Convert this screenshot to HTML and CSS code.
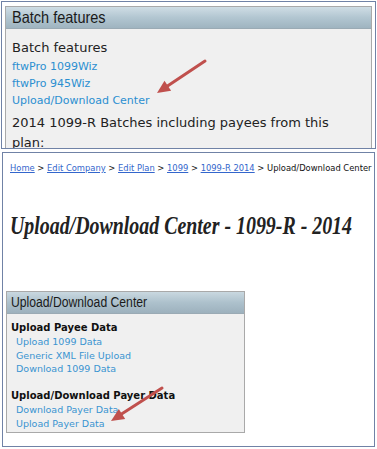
FILE: index.html
```html
<!DOCTYPE html>
<html lang="en">
<head>
    <meta charset="UTF-8">
    <title>Upload/Download Center</title>
    <link rel="stylesheet" href="styles.css">
</head>
<body>
    <div class="shot shot-top">
        <div class="panel">
            <div class="panel-head"><span>Batch features</span></div>
            <div class="panel-body">
                <div class="label">Batch features</div>
                <a class="link" href="#">ftwPro 1099Wiz</a>
                <a class="link" href="#">ftwPro 945Wiz</a>
                <a class="link" href="#">Upload/Download Center</a>
                <div class="label label-gap">2014 1099-R Batches including payees from this plan:</div>
            </div>
        </div>
    </div>

    <div class="shot shot-bottom">
        <div class="crumbs">
            <a href="#">Home</a> &gt; <a href="#">Edit Company</a> &gt; <a href="#">Edit Plan</a> &gt; <a href="#">1099</a> &gt; <a href="#">1099-R 2014</a> &gt; Upload/Download Center
        </div>
        <h1 class="title"><span>Upload/Download Center - 1099-R - 2014</span></h1>
        <div class="box">
            <div class="box-head"><span>Upload/Download Center</span></div>
            <div class="box-body">
                <div class="group">Upload Payee Data</div>
                <a class="sub" href="#">Upload 1099 Data</a>
                <a class="sub" href="#">Generic XML File Upload</a>
                <a class="sub" href="#">Download 1099 Data</a>
                <div class="group group-gap">Upload/Download Payer Data</div>
                <a class="sub" href="#">Download Payer Data</a>
                <a class="sub" href="#">Upload Payer Data</a>
            </div>
        </div>
    </div>

    <!-- red callout arrows drawn over both screenshots -->
    <svg class="arrow arrow-top" width="60" height="45" viewBox="0 0 60 45">
        <line x1="55" y1="5" x2="16" y2="31" stroke="#c0504d" stroke-width="3" stroke-linecap="round"/>
        <polygon points="7,37 14.5,24.8 21.1,34.8" fill="#c0504d"/>
    </svg>
    <svg class="arrow arrow-bottom" width="60" height="45" viewBox="0 0 60 45">
        <line x1="57" y1="5" x2="15" y2="32" stroke="#c0504d" stroke-width="3" stroke-linecap="round"/>
        <polygon points="6,38 13.8,26 20.2,36" fill="#c0504d"/>
    </svg>
</body>
</html>
```

FILE: styles.css
```css
* {
    margin: 0;
    padding: 0;
    box-sizing: border-box;
}

body {
    position: relative;
    background: #fff;
    width: 377px;
    height: 449px;
    overflow: hidden;
    font-family: "DejaVu Sans", Verdana, sans-serif;
}

a {
    text-decoration: none;
}

.shot {
    border: 1px solid #7082a6;
    background: #fff;
    overflow: hidden;
}

/* top screenshot */
.shot-top {
    margin: 1px 1px 0 1px;
    height: 148px;
    padding: 4px 3px 0 3px;
}

.panel {
    border: 1px solid #a9a9a9;
    border-bottom: none;
    background: #f0f0f0;
    height: 160px;
}

.panel-head {
    height: 22px;
    padding: 1px 0 0 6px;
    background: linear-gradient(to bottom, #cfdde5 0%, #b2c6d1 50%, #9fb4c0 100%);
    border-bottom: 1px solid #9aaab4;
    font-family: "Liberation Sans", Arial, sans-serif;
    font-size: 16.5px;
    color: #1a1a1a;
    white-space: nowrap;
}

.panel-head span {
    display: inline-block;
    transform: scaleX(0.88);
    transform-origin: left center;
}

.panel-body {
    padding: 9px 6px 0 6px;
}

.label {
    font-size: 13px;
    line-height: 20px;
    color: #222;
}

.label-gap {
    margin-top: 4px;
}

.link {
    display: block;
    font-size: 11px;
    line-height: 17px;
    color: #2b8fd0;
}

/* bottom screenshot */
.shot-bottom {
    margin: 3px 2px 0 2px;
    height: 295px;
    padding: 9px 0 0 7px;
}

.crumbs {
    font-family: "DejaVu Sans", Tahoma, sans-serif;
    font-stretch: condensed;
    font-size: 9.3px;
    line-height: 12px;
    color: #111;
    white-space: nowrap;
}

.crumbs a {
    color: #3366cc;
    text-decoration: underline;
}

.title {
    margin-top: 37px;
    height: 30px;
    font-family: "Liberation Serif", "Times New Roman", serif;
    font-style: italic;
    font-weight: bold;
    font-size: 26px;
    line-height: 30px;
    color: #222;
    white-space: nowrap;
}

.title span {
    display: inline-block;
    transform: scaleX(0.765);
    transform-origin: left center;
}

.box {
    margin: 50px 0 0 -4px;
    width: 239px;
    height: 142px;
    border: 1px solid #a9a9a9;
    background: #f0f0f0;
}

.box-head {
    height: 22px;
    padding: 2px 0 0 4px;
    background: linear-gradient(to bottom, #c9d8e0 0%, #adc1cc 50%, #9db1bd 100%);
    border-bottom: 1px solid #9aaab4;
    font-family: "Liberation Sans", Arial, sans-serif;
    font-size: 14px;
    color: #1a1a1a;
    white-space: nowrap;
}

.box-head span {
    display: inline-block;
    transform: scaleX(0.87);
    transform-origin: left center;
}

.box-body {
    padding: 7px 0 0 4px;
}

.group {
    font-size: 10px;
    font-weight: bold;
    line-height: 14px;
    color: #111;
}

.group-gap {
    margin-top: 13.5px;
}

.sub {
    display: block;
    padding-left: 5px;
    font-size: 9.5px;
    line-height: 13.5px;
    color: #3a94d0;
}

.arrow {
    position: absolute;
}

.arrow-top {
    left: 150px;
    top: 56px;
}

.arrow-bottom {
    left: 105px;
    top: 383px;
}
```
